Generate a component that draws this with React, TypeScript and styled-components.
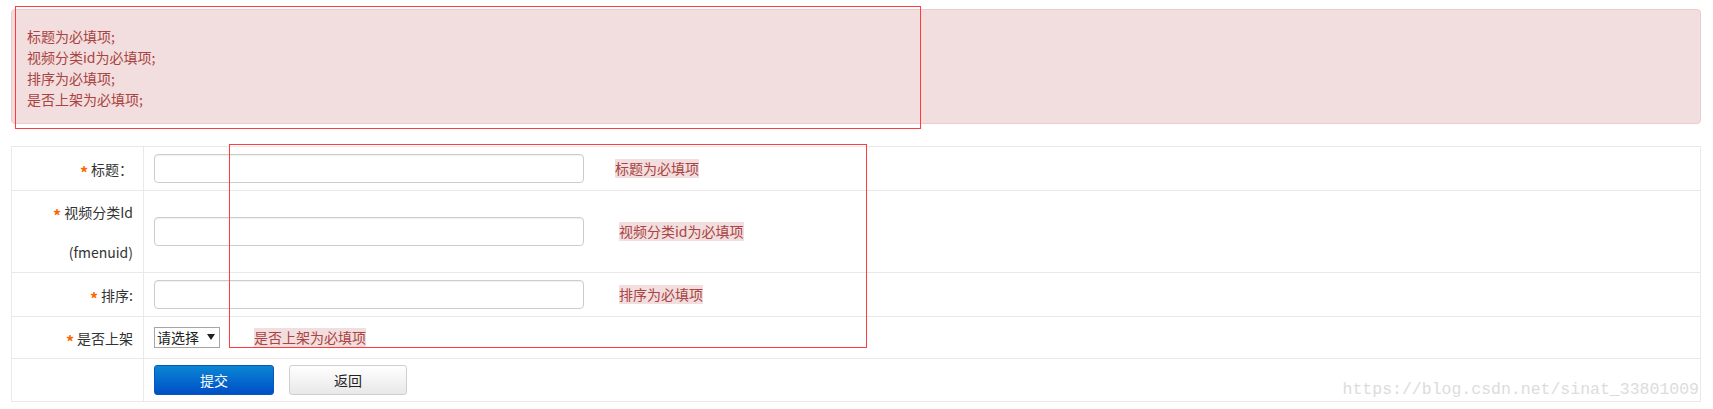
import styled, { createGlobalStyle } from "styled-components";

const GlobalStyle = createGlobalStyle`
  body {
    margin: 0;
    background: #fff;
    font-family: "Noto Sans CJK SC", "Noto Sans", sans-serif;
    color: #333;
  }
`;

const errors = ["标题为必填项;", "视频分类id为必填项;", "排序为必填项;", "是否上架为必填项;"];

export default function App() {
  return (
    <Page>
      <GlobalStyle />
      <Alert>
        {errors.map((e) => (
          <AlertLine key={e}>{e}</AlertLine>
        ))}
      </Alert>

      <FormTable>
        <Row $h={43}>
          <LabelCell>
            <LabelText>
              <Star>*</Star>标题：
            </LabelText>
          </LabelCell>
          <FieldCell>
            <TextInput type="text" />
            <ErrorTip $ml={31}>标题为必填项</ErrorTip>
          </FieldCell>
        </Row>
        <Row $h={81}>
          <LabelCell>
            <LabelText>
              <Star>*</Star>视频分类Id
              <br />
              (fmenuid)
            </LabelText>
          </LabelCell>
          <FieldCell>
            <TextInput type="text" />
            <ErrorTip $ml={35}>视频分类id为必填项</ErrorTip>
          </FieldCell>
        </Row>
        <Row $h={43}>
          <LabelCell>
            <LabelText>
              <Star>*</Star>排序:
            </LabelText>
          </LabelCell>
          <FieldCell>
            <TextInput type="text" />
            <ErrorTip $ml={35}>排序为必填项</ErrorTip>
          </FieldCell>
        </Row>
        <Row $h={41}>
          <LabelCell>
            <LabelText>
              <Star>*</Star>是否上架
            </LabelText>
          </LabelCell>
          <FieldCell>
            <SelectBox>
              <NativeSelect defaultValue="">
                <option value="">请选择</option>
                <option value="1">是</option>
                <option value="0">否</option>
              </NativeSelect>
              <Arrow width="8" height="6" viewBox="0 0 8 6">
                <path d="M0 0 H8 L4 6 Z" fill="#222" />
              </Arrow>
            </SelectBox>
            <ErrorTip $ml={34}>是否上架为必填项</ErrorTip>
          </FieldCell>
        </Row>
        <Row $h={42} $last>
          <LabelCell />
          <FieldCell>
            <SubmitButton type="button">提交</SubmitButton>
            <BackButton type="button">返回</BackButton>
          </FieldCell>
        </Row>
      </FormTable>

      <Watermark>https://blog.csdn.net/sinat_33801009</Watermark>

      <Mark $x={15} $y={6} $w={906} $h={123} />
      <Mark $x={229} $y={144} $w={638} $h={204} />
    </Page>
  );
}

const Page = styled.div`
  position: relative;
  padding: 9px 12px 6px 11px;
  min-height: 409px;
  box-sizing: border-box;
`;

const Alert = styled.div`
  background: #f2dede;
  border: 1px solid #ebccd1;
  border-radius: 4px;
  color: #a94442;
  padding: 16px 15px 13px;
  margin-bottom: 22px;
  font-size: 14px;
  line-height: 21px;
`;

const AlertLine = styled.div`
  white-space: nowrap;
`;

const FormTable = styled.div`
  border: 1px solid #e9e9e9;
  display: flex;
  flex-direction: column;
`;

const Row = styled.div<{ $h: number; $last?: boolean }>`
  display: grid;
  grid-template-columns: 131px 1fr;
  height: ${(p) => p.$h}px;
  border-bottom: ${(p) => (p.$last ? "none" : "1px solid #e9e9e9")};
`;

const LabelCell = styled.div`
  display: flex;
  align-items: center;
  justify-content: flex-end;
  padding-right: 10px;
  font-size: 14px;
  color: #333;
`;

const LabelText = styled.div`
  text-align: right;
  line-height: 40px;
  white-space: nowrap;
`;

const Star = styled.span`
  position: relative;
  top: 4px;
  color: #ff6600;
  font-size: 16px;
  font-weight: bold;
  margin-right: 3px;
`;

const FieldCell = styled.div`
  border-left: 1px solid #e9e9e9;
  padding-left: 10px;
  display: flex;
  align-items: center;
`;

const TextInput = styled.input`
  box-sizing: border-box;
  width: 430px;
  height: 29px;
  border: 1px solid #cccccc;
  border-radius: 4px;
  box-shadow: inset 0 1px 1px rgba(0, 0, 0, 0.06);
  padding: 0 8px;
  font-size: 14px;
  outline: none;
`;

const ErrorTip = styled.span<{ $ml: number }>`
  margin-left: ${(p) => p.$ml}px;
  background: #f2dede;
  color: #a94442;
  font-size: 14px;
  line-height: 19px;
  white-space: nowrap;
`;

const SelectBox = styled.div`
  position: relative;
  display: inline-flex;
`;

const NativeSelect = styled.select`
  appearance: none;
  box-sizing: border-box;
  width: 66px;
  height: 21px;
  border: 1px solid #a6a6a6;
  border-radius: 0;
  background: #fff;
  padding: 0 0 0 2px;
  font-family: "Noto Sans CJK SC", sans-serif;
  font-size: 14px;
  line-height: 19px;
  color: #222;
  outline: none;
`;

const Arrow = styled.svg`
  position: absolute;
  right: 5px;
  top: 7px;
  pointer-events: none;
`;

const buttonBase = `
  box-sizing: border-box;
  height: 30px;
  border-radius: 3px;
  font-family: "Noto Sans CJK SC", sans-serif;
  font-size: 14px;
  cursor: pointer;
  padding: 0;
`;

const SubmitButton = styled.button`
  ${buttonBase}
  width: 120px;
  border: 1px solid #0858b8;
  background: linear-gradient(#0a86d4, #004fc6);
  color: #fff;
`;

const BackButton = styled.button`
  ${buttonBase}
  width: 118px;
  margin-left: 15px;
  border: 1px solid #cfcfcf;
  background: linear-gradient(#ffffff, #e8e8e8);
  color: #222;
`;

const Watermark = styled.div`
  position: absolute;
  right: 14px;
  top: 380px;
  font-family: "Liberation Mono", monospace;
  font-size: 16.5px;
  line-height: 20px;
  color: #dcdcdc;
  white-space: nowrap;
  pointer-events: none;
`;

const Mark = styled.div<{ $x: number; $y: number; $w: number; $h: number }>`
  position: absolute;
  left: ${(p) => p.$x}px;
  top: ${(p) => p.$y}px;
  width: ${(p) => p.$w}px;
  height: ${(p) => p.$h}px;
  box-sizing: border-box;
  border: 1px solid #ff3b3b;
  pointer-events: none;
`;
